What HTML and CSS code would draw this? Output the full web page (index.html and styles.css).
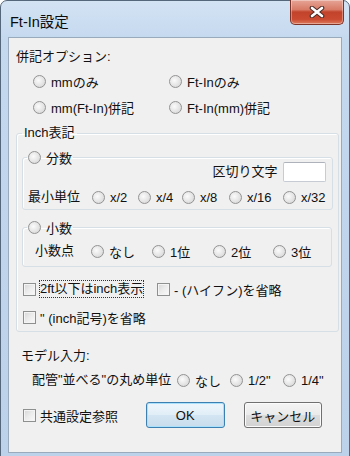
FILE: index.html
```html
<!DOCTYPE html>
<html lang="ja">
<head>
    <meta charset="UTF-8">
    <title>Ft-In設定</title>
    <link rel="stylesheet" href="styles.css">
</head>
<body>
<div class="window">
    <div class="titlebar">
        <span class="title">Ft-In設定</span>
        <span class="close-btn">
            <svg width="16" height="12" viewBox="0 0 16 12">
                <path d="M3 2 L13 10 M13 2 L3 10" stroke="#4a2a26" stroke-width="4.6" stroke-linecap="round"/>
                <path d="M3 2 L13 10 M13 2 L3 10" stroke="#ffffff" stroke-width="2.6" stroke-linecap="round"/>
            </svg>
        </span>
    </div>
    <div class="client">
        <div class="label head">併記オプション:</div>
        <div class="opt-row first">
            <label class="item w136"><span class="radio"></span>mmのみ</label>
            <label class="item"><span class="radio"></span>Ft-Inのみ</label>
        </div>
        <div class="opt-row second">
            <label class="item w136"><span class="radio"></span>mm(Ft-In)併記</label>
            <label class="item"><span class="radio"></span>Ft-In(mm)併記</label>
        </div>

        <fieldset class="group inch">
            <legend class="legend-text">Inch表記</legend>

            <fieldset class="group sub frac">
                <legend class="legend-radio"><span class="radio"></span>分数</legend>
                <div class="sep-row">
                    <span class="label">区切り文字</span>
                    <span class="textbox"></span>
                </div>
                <div class="unit-row">
                    <span class="label w64">最小単位</span>
                    <label class="item w46"><span class="radio"></span>x/2</label>
                    <label class="item w44"><span class="radio"></span>x/4</label>
                    <label class="item w47"><span class="radio"></span>x/8</label>
                    <label class="item w54"><span class="radio"></span>x/16</label>
                    <label class="item"><span class="radio"></span>x/32</label>
                </div>
            </fieldset>

            <fieldset class="group sub dec">
                <legend class="legend-radio"><span class="radio"></span>小数</legend>
                <div class="unit-row dec-row">
                    <span class="label w56">小数点</span>
                    <label class="item w61"><span class="radio"></span>なし</label>
                    <label class="item w61"><span class="radio"></span>1位</label>
                    <label class="item w60"><span class="radio"></span>2位</label>
                    <label class="item"><span class="radio"></span>3位</label>
                </div>
            </fieldset>

            <div class="check-row first">
                <label class="item w134"><span class="check"></span><span class="focus">2ft以下はinch表示</span></label>
                <label class="item"><span class="check"></span>- (ハイフン)を省略</label>
            </div>
            <div class="check-row second">
                <label class="item"><span class="check"></span>" (inch記号)を省略</label>
            </div>
        </fieldset>

        <div class="label model-head">モデル入力:</div>
        <div class="model-row">
            <span class="label w145">配管"並べる"の丸め単位</span>
            <label class="item w53"><span class="radio"></span>なし</label>
            <label class="item w53"><span class="radio"></span>1/2"</label>
            <label class="item"><span class="radio"></span>1/4"</label>
        </div>

        <div class="bottom-row">
            <label class="item w123"><span class="check"></span>共通設定参照</label>
            <span class="button default">OK</span>
            <span class="button">キャンセル</span>
        </div>
    </div>
</div>
</body>
</html>
```

FILE: styles.css
```css
body {
    margin: 0;
    width: 350px;
    height: 456px;
    overflow: hidden;
    font-family: "Liberation Sans", "Noto Sans CJK JP", sans-serif;
    font-size: 13px;
    color: #111;
    background: #ffffff;
}
.window {
    box-sizing: border-box;
    width: 350px;
    height: 460px;
    border: 1px solid #55677b;
    border-radius: 7px 7px 0 0;
    background: linear-gradient(to bottom, #d3e3f4 0px, #c4d8ee 40px, #bcd2ea 100%);
}
.titlebar {
    height: 36px;
    display: flex;
    justify-content: space-between;
    align-items: flex-start;
}
.title {
    margin: 9px 0 0 9px;
    font-size: 14.5px;
    color: #0b0b0b;
}
.close-btn {
    box-sizing: border-box;
    width: 54px;
    height: 25px;
    margin: -1px 5px 0 0;
    border: 1px solid #7d3327;
    border-top: none;
    border-radius: 0 0 5px 5px;
    background: linear-gradient(to bottom, #e6a597 0%, #d87a66 40%, #c2432b 50%, #c94a30 80%, #dd7a5e 100%);
    box-shadow: inset 0 0 0 1px rgba(255, 255, 255, 0.35);
    display: flex;
    align-items: center;
    justify-content: center;
}
.client {
    box-sizing: border-box;
    width: 334px;
    height: 416px;
    margin-left: 7px;
    border: 1px solid #9aaabd;
    background: #f0f0f0;
    padding-top: 10px;
}
.label {
    white-space: nowrap;
    height: 18px;
    line-height: 18px;
}
.head {
    padding-left: 7px;
}
.item {
    display: flex;
    align-items: center;
    height: 18px;
    white-space: nowrap;
}
.radio {
    box-sizing: border-box;
    width: 13px;
    height: 13px;
    border-radius: 50%;
    border: 1px solid #939393;
    background: radial-gradient(circle at 40% 40%, #fbfbfb 0%, #e4e4e4 55%, #cfcfcf 100%);
    margin-right: 5px;
    flex: none;
}
.check {
    box-sizing: border-box;
    width: 13px;
    height: 13px;
    border: 1px solid #8e8f8f;
    background: linear-gradient(135deg, #d6d6d6 0%, #ececec 50%, #fafafa 100%);
    box-shadow: inset 0 0 0 1px #f4f4f4;
    margin-right: 4px;
    flex: none;
}
.opt-row {
    display: flex;
    padding-left: 24px;
}
.opt-row.first {
    margin-top: 6px;
}
.opt-row.second {
    margin-top: 8px;
}
.group {
    margin: 0;
    padding: 0;
    border: 1px solid #d5dfe5;
    border-radius: 3px;
    box-shadow: inset 1px 1px 0 #ffffff;
}
.inch {
    width: 323px;
    box-sizing: border-box;
    margin: 8px 0 0 7px;
    padding: 0 0 5px 0;
}
.legend-text {
    margin-left: 5px;
    padding: 0 2px;
    height: 18px;
    line-height: 18px;
}
.legend-radio {
    display: flex;
    align-items: center;
    margin-left: 4px;
    padding: 0 1px;
    height: 18px;
}
.sub {
    box-sizing: border-box;
    width: 310px;
    margin-left: 5px;
}
.frac {
    margin-top: 6px;
    padding: 0 6px 3px 0;
}
.sep-row {
    display: flex;
    justify-content: flex-end;
    align-items: center;
    height: 20px;
    margin-top: -4px;
}
.sep-row .label {
    margin-right: 5px;
}
.textbox {
    box-sizing: border-box;
    width: 43px;
    height: 20px;
    background: #ffffff;
    border: 1px solid #c7ccd4;
    border-top-color: #aeb3bb;
    border-radius: 2px;
}
.unit-row {
    display: flex;
    margin-top: 6px;
    padding-left: 5px;
}
.dec {
    margin-top: 8px;
    padding: 0 6px 6px 0;
}
.dec-row {
    padding-left: 12px;
}
.check-row {
    display: flex;
    padding-left: 6px;
}
.check-row.first {
    margin-top: 13px;
}
.check-row.second {
    margin-top: 10px;
}
.focus {
    outline: 1px dotted #333;
    outline-offset: 0;
    line-height: 16px;
}
.model-head {
    margin-top: 15px;
    padding-left: 12px;
}
.model-row {
    display: flex;
    margin-top: 6px;
    padding-left: 23px;
}
.bottom-row {
    display: flex;
    align-items: center;
    margin-top: 13px;
    padding-left: 14px;
    height: 26px;
}
.button {
    box-sizing: border-box;
    width: 82px;
    height: 26px;
    border: 1px solid #707070;
    border-radius: 3px;
    background: linear-gradient(to bottom, #f4f4f4 0%, #ebebeb 48%, #dddddd 52%, #d2d2d2 100%);
    box-shadow: inset 0 0 0 1px #fbfbfb;
    display: flex;
    align-items: center;
    justify-content: center;
    margin-right: 19px;
}
.button.default {
    border-color: #3c7fb1;
    background: linear-gradient(to bottom, #eef6fb 0%, #e1eef7 48%, #d3e5f2 52%, #c8dcec 100%);
    box-shadow: inset 0 0 0 1px #a9e0fb;
}
.w44 { width: 44px; flex: none; }
.w46 { width: 46px; flex: none; }
.w47 { width: 47px; flex: none; }
.w53 { width: 53px; flex: none; }
.w54 { width: 54px; flex: none; }
.w56 { width: 56px; flex: none; }
.w60 { width: 60px; flex: none; }
.w61 { width: 61px; flex: none; }
.w64 { width: 64px; flex: none; }
.w123 { width: 123px; flex: none; }
.w134 { width: 134px; flex: none; }
.w136 { width: 136px; flex: none; }
.w145 { width: 145px; flex: none; }
```
